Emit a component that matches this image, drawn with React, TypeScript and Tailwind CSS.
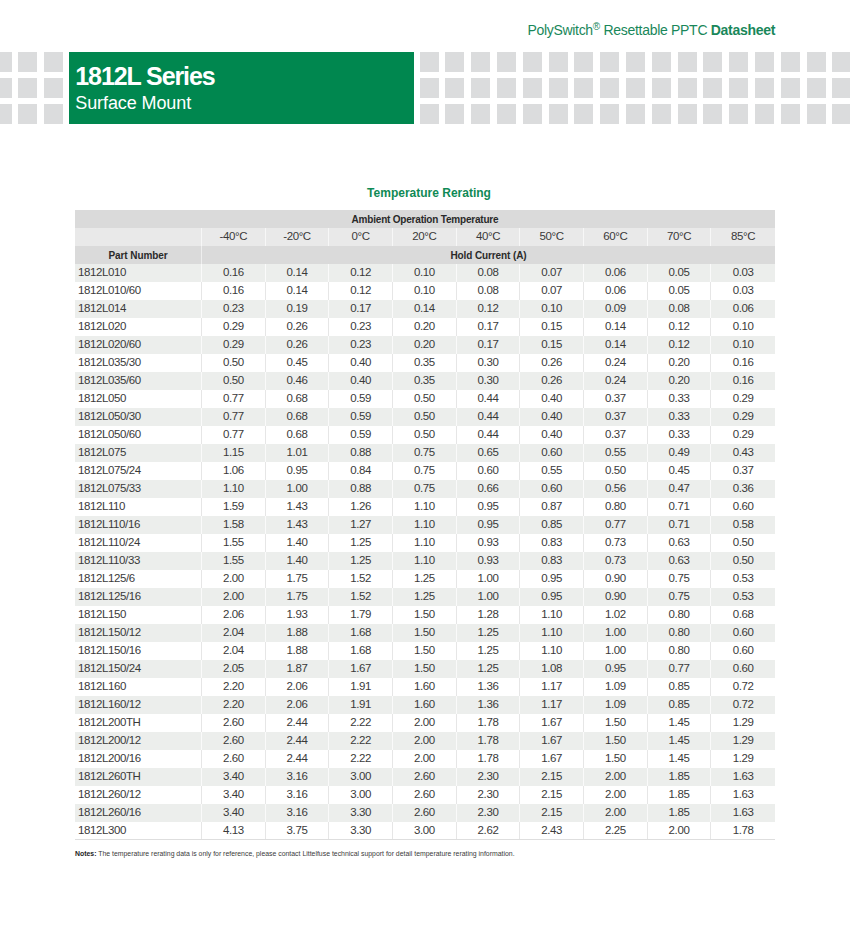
import React from "react";

const temps = ["-40°C", "-20°C", "0°C", "20°C", "40°C", "50°C", "60°C", "70°C", "85°C"];

const rows: [string, string[]][] = [
  ["1812L010", ["0.16", "0.14", "0.12", "0.10", "0.08", "0.07", "0.06", "0.05", "0.03"]],
  ["1812L010/60", ["0.16", "0.14", "0.12", "0.10", "0.08", "0.07", "0.06", "0.05", "0.03"]],
  ["1812L014", ["0.23", "0.19", "0.17", "0.14", "0.12", "0.10", "0.09", "0.08", "0.06"]],
  ["1812L020", ["0.29", "0.26", "0.23", "0.20", "0.17", "0.15", "0.14", "0.12", "0.10"]],
  ["1812L020/60", ["0.29", "0.26", "0.23", "0.20", "0.17", "0.15", "0.14", "0.12", "0.10"]],
  ["1812L035/30", ["0.50", "0.45", "0.40", "0.35", "0.30", "0.26", "0.24", "0.20", "0.16"]],
  ["1812L035/60", ["0.50", "0.46", "0.40", "0.35", "0.30", "0.26", "0.24", "0.20", "0.16"]],
  ["1812L050", ["0.77", "0.68", "0.59", "0.50", "0.44", "0.40", "0.37", "0.33", "0.29"]],
  ["1812L050/30", ["0.77", "0.68", "0.59", "0.50", "0.44", "0.40", "0.37", "0.33", "0.29"]],
  ["1812L050/60", ["0.77", "0.68", "0.59", "0.50", "0.44", "0.40", "0.37", "0.33", "0.29"]],
  ["1812L075", ["1.15", "1.01", "0.88", "0.75", "0.65", "0.60", "0.55", "0.49", "0.43"]],
  ["1812L075/24", ["1.06", "0.95", "0.84", "0.75", "0.60", "0.55", "0.50", "0.45", "0.37"]],
  ["1812L075/33", ["1.10", "1.00", "0.88", "0.75", "0.66", "0.60", "0.56", "0.47", "0.36"]],
  ["1812L110", ["1.59", "1.43", "1.26", "1.10", "0.95", "0.87", "0.80", "0.71", "0.60"]],
  ["1812L110/16", ["1.58", "1.43", "1.27", "1.10", "0.95", "0.85", "0.77", "0.71", "0.58"]],
  ["1812L110/24", ["1.55", "1.40", "1.25", "1.10", "0.93", "0.83", "0.73", "0.63", "0.50"]],
  ["1812L110/33", ["1.55", "1.40", "1.25", "1.10", "0.93", "0.83", "0.73", "0.63", "0.50"]],
  ["1812L125/6", ["2.00", "1.75", "1.52", "1.25", "1.00", "0.95", "0.90", "0.75", "0.53"]],
  ["1812L125/16", ["2.00", "1.75", "1.52", "1.25", "1.00", "0.95", "0.90", "0.75", "0.53"]],
  ["1812L150", ["2.06", "1.93", "1.79", "1.50", "1.28", "1.10", "1.02", "0.80", "0.68"]],
  ["1812L150/12", ["2.04", "1.88", "1.68", "1.50", "1.25", "1.10", "1.00", "0.80", "0.60"]],
  ["1812L150/16", ["2.04", "1.88", "1.68", "1.50", "1.25", "1.10", "1.00", "0.80", "0.60"]],
  ["1812L150/24", ["2.05", "1.87", "1.67", "1.50", "1.25", "1.08", "0.95", "0.77", "0.60"]],
  ["1812L160", ["2.20", "2.06", "1.91", "1.60", "1.36", "1.17", "1.09", "0.85", "0.72"]],
  ["1812L160/12", ["2.20", "2.06", "1.91", "1.60", "1.36", "1.17", "1.09", "0.85", "0.72"]],
  ["1812L200TH", ["2.60", "2.44", "2.22", "2.00", "1.78", "1.67", "1.50", "1.45", "1.29"]],
  ["1812L200/12", ["2.60", "2.44", "2.22", "2.00", "1.78", "1.67", "1.50", "1.45", "1.29"]],
  ["1812L200/16", ["2.60", "2.44", "2.22", "2.00", "1.78", "1.67", "1.50", "1.45", "1.29"]],
  ["1812L260TH", ["3.40", "3.16", "3.00", "2.60", "2.30", "2.15", "2.00", "1.85", "1.63"]],
  ["1812L260/12", ["3.40", "3.16", "3.00", "2.60", "2.30", "2.15", "2.00", "1.85", "1.63"]],
  ["1812L260/16", ["3.40", "3.16", "3.30", "2.60", "2.30", "2.15", "2.00", "1.85", "1.63"]],
  ["1812L300", ["4.13", "3.75", "3.30", "3.00", "2.62", "2.43", "2.25", "2.00", "1.78"]],
];

function Squares({ cols }: { cols: number }) {
  return (
    <div className="grid shrink-0 gap-x-[6.8px] gap-y-[5.8px]" style={{ gridTemplateColumns: `repeat(${cols}, 19px)` }}>
      {Array.from({ length: cols * 3 }).map((_, i) => (
        <div key={i} className="h-[20px] w-[19px] bg-[#dbdcdd]" />
      ))}
    </div>
  );
}

export default function App() {
  return (
    <div className="relative h-[936px] w-[850px] overflow-hidden bg-white font-['Liberation_Sans',Arial,sans-serif] text-[#3a3a3a]">
      {/* top line */}
      <div className="flex h-[52px] justify-end pr-[75px] pt-[22px]">
        <div className="text-[14px] leading-[16px] tracking-[-0.3px] text-[#19875a]">
          PolySwitch<sup className="relative top-[-5px] text-[10px]">®</sup> Resettable PPTC <span className="font-bold">Datasheet</span>
        </div>
      </div>

      {/* header band */}
      <div className="flex h-[72px] items-start overflow-hidden">
        <div className="ml-[-7.5px]">
          <Squares cols={3} />
        </div>
        <div className="ml-[6.2px] h-[72px] w-[345px] shrink-0 bg-[#00874f] pl-[6px] pt-[11px] text-white">
          <div className="text-[25px] font-bold leading-[26px] tracking-[-1.1px]">1812L Series</div>
          <div className="mt-[4px] text-[18px] leading-[20px] tracking-[-0.1px]">Surface Mount</div>
        </div>
        <div className="ml-[5.3px]">
          <Squares cols={17} />
        </div>
      </div>

      {/* title */}
      <div className="mt-[62px] pl-[8px] text-center text-[12px] font-bold leading-[14px] text-[#0f8a55]">
        Temperature Rerating
      </div>

      {/* table */}
      <div className="ml-[75px] mt-[10px] w-[700px] text-[11.5px] tracking-[-0.4px]">
        <div className="grid h-[18px] items-center bg-[#dadada] text-center text-[10px] font-bold tracking-[-0.2px] text-[#2a2a2a]">
          Ambient Operation Temperature
        </div>
        <div className="grid h-[18px] grid-cols-[127px_repeat(9,1fr)] bg-[#e9e9e9]">
          <div className="border-r border-[#f7f7f7]" />
          {temps.map((t, i) => (
            <div key={t} className={`flex items-center justify-center ${i < 8 ? "border-r border-[#f7f7f7]" : ""}`}>
              {t}
            </div>
          ))}
        </div>
        <div className="grid h-[18px] grid-cols-[127px_1fr] bg-[#dadada] text-[10px] font-bold tracking-[-0.1px] text-[#2a2a2a]">
          <div className="flex items-center justify-center border-r border-[#eeeeee]">Part Number</div>
          <div className="flex items-center justify-center">Hold Current (A)</div>
        </div>
        {rows.map(([name, vals], r) => (
          <div
            key={name}
            className={`grid h-[18px] grid-cols-[127px_repeat(9,1fr)] ${r % 2 === 0 ? "bg-[#eceeec]" : "bg-white"} ${r === rows.length - 1 ? "border-b border-[#dedede]" : ""}`}
          >
            <div className={`flex items-center border-r pl-[3px] ${r % 2 === 0 ? "border-[#fafafa]" : "border-[#e6e6e6]"}`}>{name}</div>
            {vals.map((v, i) => (
              <div
                key={i}
                className={`flex items-center justify-center ${i < 8 ? `border-r ${r % 2 === 0 ? "border-[#fafafa]" : "border-[#e6e6e6]"}` : ""}`}
              >
                {v}
              </div>
            ))}
          </div>
        ))}
        <div className="mt-[10px] text-[6.9px] leading-[8px] tracking-[0px] text-[#3a3a3a]">
          <span className="font-bold text-[#222]">Notes:</span> The temperature rerating data is only for reference, please contact Littelfuse technical support for detail temperature rerating information.
        </div>
      </div>
    </div>
  );
}
